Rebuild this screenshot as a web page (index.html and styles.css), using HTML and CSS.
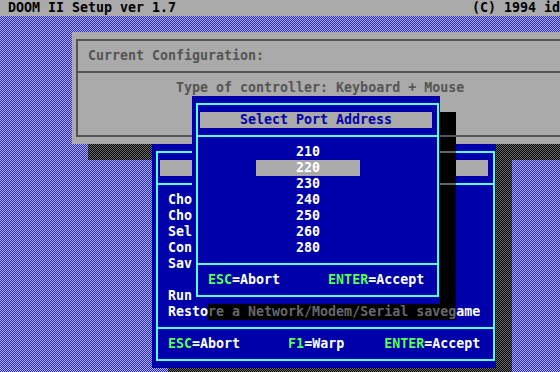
FILE: index.html
```html
<!DOCTYPE html>
<html>
<head>
<meta charset="utf-8">
<title>DOOM II Setup</title>
<link rel="stylesheet" href="styles.css">
</head>
<body>
<div class="screen">
  <header class="topbar"><span>DOOM II Setup ver 1.7</span><span>(C) 1994 id Software</span></header>

  <div class="shadow dither-dark config-shadow"></div>
  <section class="config">
    <div class="config-frame">
      <div class="config-head">Current Configuration:</div>
      <div class="config-body">Type of controller: Keyboard + Mouse</div>
    </div>
  </section>

  <div class="shadow dither-dark main-shadow-r"></div>
  <div class="shadow dither-dark main-shadow-b"></div>
  <section class="win main">
    <div class="frame">
      <div class="title">Main Menu</div>
      <ul class="menu">
        <li>Choose Sound FX card</li>
        <li>Choose Music Card</li>
        <li>Select Controller Type</li>
        <li>Configure Controller</li>
        <li>Save parameters and launch DOOM II</li>
        <li></li>
        <li>Run Network/Modem/Serial game</li>
        <li>Resto<span class="under-shadow">re a Network/Modem/Serial saveg</span>ame</li>
      </ul>
      <div class="keys"><span class="k">ESC</span>=Abort      <span class="k">F1</span>=Warp     <span class="k">ENTER</span>=Accept</div>
    </div>
  </section>

  <div class="popup-shadow"></div>
  <section class="win popup">
    <div class="frame">
      <div class="title">Select Port Address</div>
      <ul class="ports">
        <li>210</li>
        <li class="sel">220</li>
        <li>230</li>
        <li>240</li>
        <li>250</li>
        <li>260</li>
        <li>280</li>
      </ul>
      <div class="keys"><span class="k">ESC</span>=Abort      <span class="k">ENTER</span>=Accept</div>
    </div>
  </section>
</div>
</body>
</html>
```

FILE: styles.css
```css
* { box-sizing: border-box; margin: 0; padding: 0; }

body { margin: 0; background: #000; }

.screen {
  position: relative;
  width: 560px;
  height: 372px;
  overflow: hidden;
  background: repeating-conic-gradient(#2424d4 0 25%, #b4b4ff 0 50%) 0 0 / 2px 2px;
  font-family: "DejaVu Sans Mono", monospace;
  font-weight: bold;
  font-size: 13.3px;
  line-height: 16px;
}

.topbar {
  display: flex;
  justify-content: space-between;
  width: 640px;
  height: 16px;
  padding: 0 8px;
  background: #aaaaaa;
  color: #000;
  white-space: pre;
}

.dither-dark {
  background: repeating-conic-gradient(#000 0 25%, #6e6e6e 0 50%) 0 0 / 2px 2px;
}

.shadow { position: absolute; }
.config-shadow { left: 88px; top: 144px; width: 640px; height: 16px; }
.main-shadow-r { left: 496px; top: 160px; width: 16px; height: 224px; }
.main-shadow-b { left: 168px; top: 368px; width: 344px; height: 16px; }

/* Current configuration panel */
.config {
  position: absolute;
  left: 72px;
  top: 32px;
  width: 560px;
  height: 112px;
  padding: 7px 0 7px 4px;
  background: #aaaaaa;
  color: #555555;
}
.config-frame {
  height: 98px;
  border: 2px solid #555555;
}
.config-head { height: 30px; padding: 7px 0 0 10px; white-space: pre; }
.config-body { border-top: 2px solid #555555; padding: 7px 0 0 98px; white-space: pre; }

/* Blue windows */
.win {
  position: absolute;
  background: #0000aa;
  color: #ffffff;
  padding: 7px 1px 7px 4px;
}
.frame { height: 100%; border: 2px solid #55ffff; }
.title {
  height: 16px;
  margin: 7px 5px 7px 2px;
  background: #aaaaaa;
  color: #0000aa;
  text-align: center;
  white-space: pre;
}
.win ul { list-style: none; border-top: 2px solid #55ffff; padding: 7px 0; }
.win li { height: 16px; white-space: pre; }
.keys { border-top: 2px solid #55ffff; padding: 7px 0 0 10px; height: 25px; white-space: pre; }
.k { color: #55ff55; }

.main { left: 152px; top: 144px; width: 344px; height: 224px; }
.menu { padding-left: 10px !important; }
.under-shadow {
  display: inline-block;
  height: 16px;
  vertical-align: top;
  background: #000;
  color: #666666;
}

.popup { left: 192px; top: 96px; width: 248px; height: 208px; }
.ports li { width: 104px; margin-left: 58px; text-align: center; }
.ports li.sel { background: #aaaaaa; }

.popup-shadow {
  position: absolute;
  left: 440px;
  top: 112px;
  width: 16px;
  height: 192px;
  background:
    linear-gradient(#555555, #555555) 0 23px / 100% 2px no-repeat,
    linear-gradient(#666666, #666666) 0 39px / 100% 2px no-repeat,
    linear-gradient(#666666, #666666) 0 71px / 100% 2px no-repeat,
    #000;
}
```
